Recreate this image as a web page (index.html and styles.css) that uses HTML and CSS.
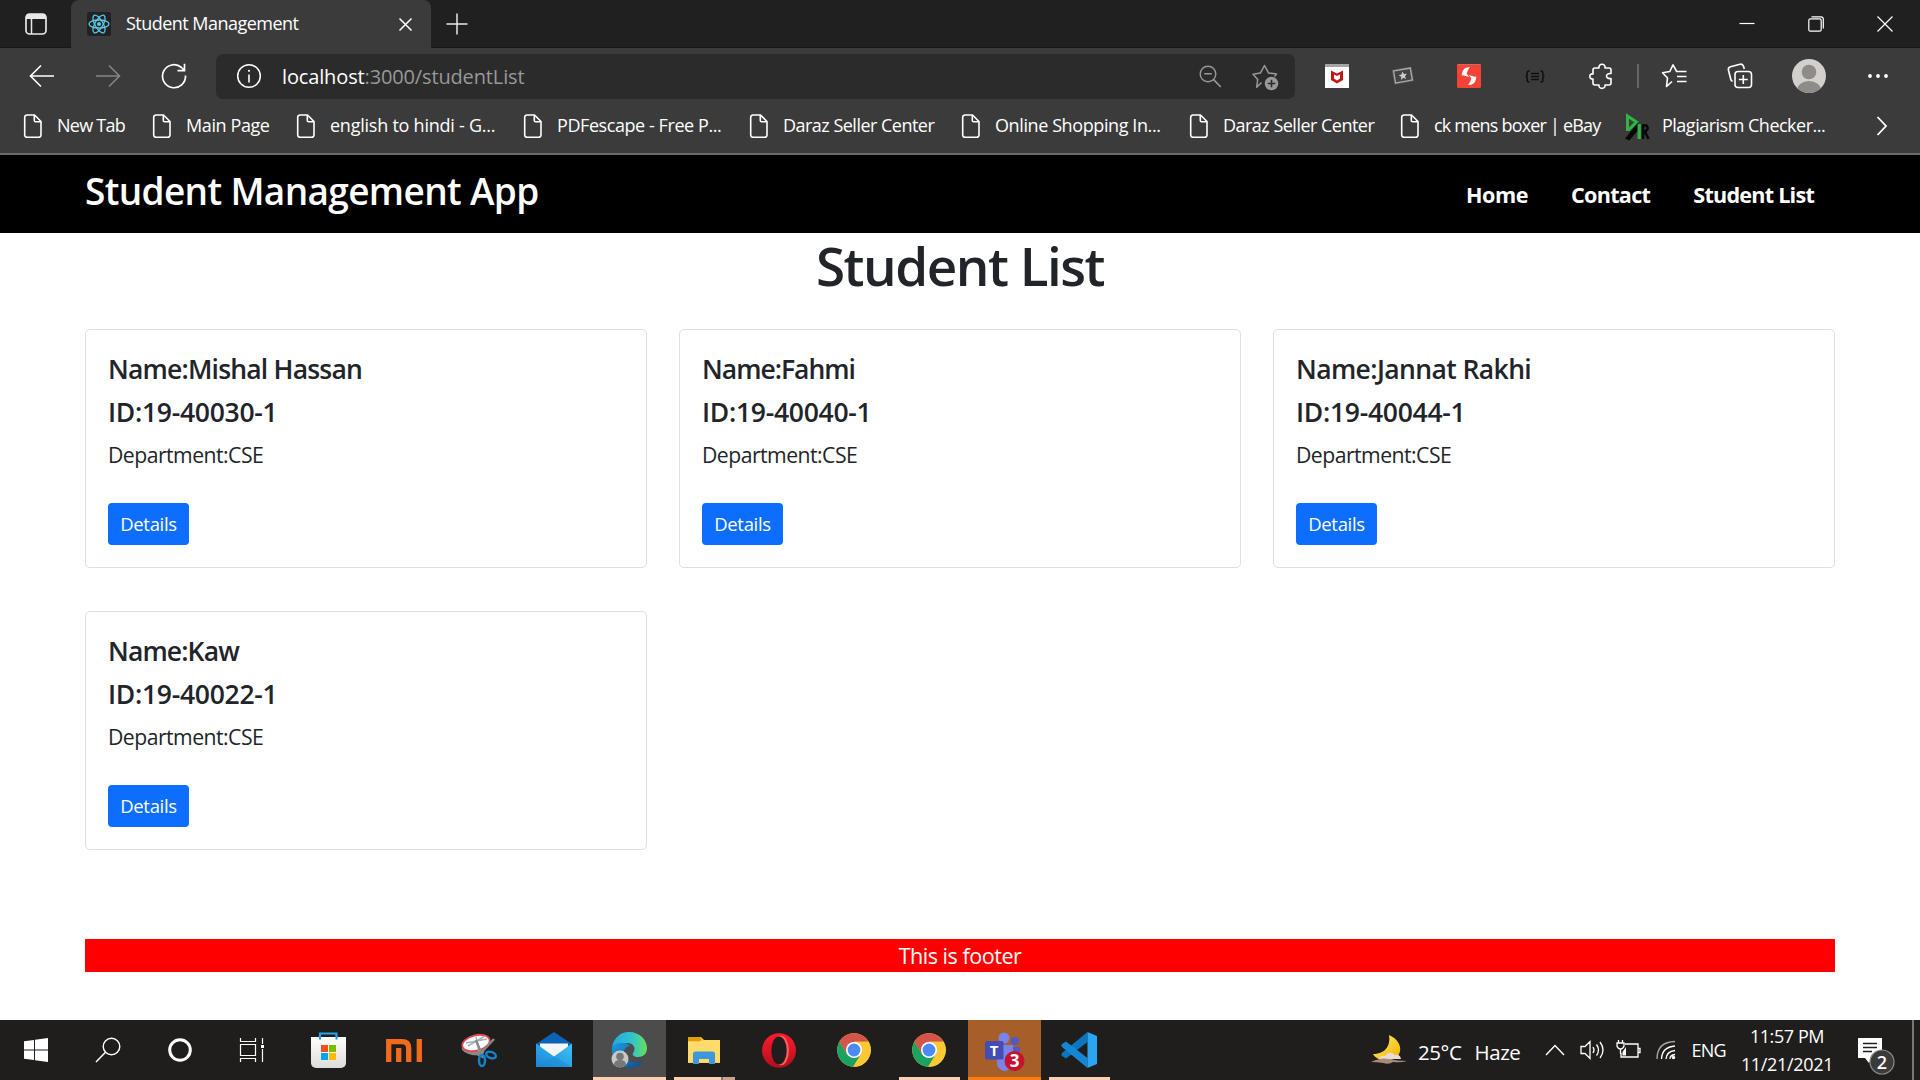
FILE: index.html
```html
<!DOCTYPE html>
<html lang="en">
<head>
<meta charset="utf-8">
<title>Student Management</title>
<link rel="stylesheet" href="styles.css">
</head>
<body>
<svg class="defs" width="0" height="0" aria-hidden="true">
  <defs>
    <symbol id="doc" viewBox="0 0 20 26"><path d="M4 2h7.5L18 8.500V22a2.300 2.300 0 0 1-2.300 2.300H4A2.300 2.300 0 0 1 1.700 22V4.300A2.300 2.300 0 0 1 4 2zM11.300 2v5.500q0 1.300 1.300 1.300H18" fill="none" stroke="#fff" stroke-width="1.600"/></symbol>
    <symbol id="chrome" viewBox="0 0 34 34">
      <circle cx="17" cy="17" r="16.800" fill="#fcc934"/>
      <path d="M2.500 8.600A16.800 16.800 0 0 1 31.600 8.700H17L9.600 21z" fill="#d5544a"/>
      <path d="M2.500 8.600A16.800 16.800 0 0 0 16.200 33.800L24 21.500H10z" fill="#1aa260"/>
      <path d="M31.600 8.700A16.800 16.800 0 0 1 16.200 33.800L24 21 24.500 13 17 8.700z" fill="#fcc934"/>
      <circle cx="17" cy="17" r="8" fill="#fff"/><circle cx="17" cy="17" r="6.400" fill="#4c8bf5"/>
    </symbol>
    <linearGradient id="edgeTop" x1="0" x2="1"><stop offset="0" stop-color="#2aa5e0"/><stop offset=".55" stop-color="#2cc3d2"/><stop offset="1" stop-color="#66e05a"/></linearGradient>
    <linearGradient id="edgeLow" x1="0" y1="0" x2="1" y2="1"><stop offset="0" stop-color="#1b9de2"/><stop offset="1" stop-color="#0c4a8e"/></linearGradient>
    <linearGradient id="opera" x1="0" y1="0" x2="0" y2="1"><stop offset="0" stop-color="#ff1b2d"/><stop offset="1" stop-color="#b0101b"/></linearGradient>
    <linearGradient id="moon" x1="0" y1="0" x2="1" y2="1"><stop offset="0" stop-color="#fff06a"/><stop offset="1" stop-color="#f2b200"/></linearGradient>
    <linearGradient id="bag" x1="0" y1="0" x2="0" y2="1"><stop offset="0" stop-color="#fff"/><stop offset="1" stop-color="#dcdcdc"/></linearGradient>
    <linearGradient id="mailFront" x1="0" y1="1" x2="1" y2="0"><stop offset="0" stop-color="#1c86d8"/><stop offset="1" stop-color="#3dc3f5"/></linearGradient>
  </defs>
</svg>

<div class="browser">
  <div class="tabstrip">
    <svg class="tabmenu" width="24" height="24" viewBox="0 0 24 24"><rect x="2" y="2" width="20" height="20" rx="3.500" fill="none" stroke="#e8e8e8" stroke-width="1.700"/><path d="M2 7V5a3 3 0 0 1 3-3h14a3 3 0 0 1 3 3v2z" fill="#e8e8e8"/><path d="M7.500 7v15" stroke="#e8e8e8" stroke-width="1.500"/></svg>
    <div class="tab">
      <svg width="24" height="24" viewBox="0 0 24 24"><rect width="24" height="24" rx="2" fill="#222"/><g fill="none" stroke="#5cc8e6" stroke-width="1.300"><ellipse cx="12" cy="12" rx="10" ry="4"/><ellipse cx="12" cy="12" rx="10" ry="4" transform="rotate(60 12 12)"/><ellipse cx="12" cy="12" rx="10" ry="4" transform="rotate(120 12 12)"/></g><circle cx="12" cy="12" r="2" fill="#5cc8e6"/></svg>
      <span class="tab-title">Student Management</span>
      <svg class="tab-close" width="15" height="15" viewBox="0 0 15 15"><path d="M1.500 1.500l12 12M13.500 1.500l-12 12" stroke="#fff" stroke-width="1.500"/></svg>
    </div>
    <svg class="newtab" width="22" height="22" viewBox="0 0 22 22"><path d="M11 .5v21M.5 11h21" stroke="#e8e8e8" stroke-width="1.500"/></svg>
    <div class="window-buttons">
      <svg width="16" height="16" viewBox="0 0 16 16"><path d="M.5 7.500h15" stroke="#fff" stroke-width="1.200"/></svg>
      <svg width="16" height="16" viewBox="0 0 16 16"><rect x=".8" y="2.800" width="12.400" height="12.400" rx="1.600" fill="none" stroke="#fff" stroke-width="1.200"/><path d="M3.500.8h9.500a2.300 2.300 0 0 1 2.300 2.300v9.500" fill="none" stroke="#fff" stroke-width="1.200"/></svg>
      <svg width="16" height="16" viewBox="0 0 16 16"><path d="M.5.5l15 15M15.500.5l-15 15" stroke="#fff" stroke-width="1.200"/></svg>
    </div>
  </div>

  <div class="toolbar">
    <svg class="back" width="26" height="24" viewBox="0 0 26 24"><path d="M25 12H2M12 1.500L1.500 12 12 22.500" fill="none" stroke="#fff" stroke-width="1.600"/></svg>
    <svg class="forward" width="26" height="24" viewBox="0 0 26 24"><path d="M1 12h23M14 1.500L24.500 12 14 22.500" fill="none" stroke="#858585" stroke-width="1.600"/></svg>
    <svg class="reload" width="26" height="26" viewBox="0 0 26 26"><path d="M24.500 12.500A11.500 11.500 0 1 1 20.500 4.500l3 3M23.500.8v6.900h-7" fill="none" stroke="#fff" stroke-width="1.700"/></svg>
    <div class="address">
      <svg width="26" height="26" viewBox="0 0 26 26"><circle cx="13" cy="13" r="11.300" fill="none" stroke="#fff" stroke-width="1.500"/><path d="M13 11.500v8" stroke="#fff" stroke-width="1.600"/><circle cx="13" cy="7.800" r="1.100" fill="#fff"/></svg>
      <span class="url"><b>localhost</b>:3000/studentList</span>
      <svg class="zoomout" width="23" height="23" viewBox="0 0 23 23"><circle cx="9" cy="9" r="7.800" fill="none" stroke="#999" stroke-width="1.400"/><path d="M5.200 8.700h7.600M14.600 14.600l7.200 7.400" stroke="#999" stroke-width="1.600"/></svg>
      <svg class="addstar" width="27" height="27" viewBox="0 0 27 27"><path d="M9.500 18.500l-4.800 4.800 1-7.800L1 10.300l7.500-1.400L12.500 1.500l4 7.400 8 1.200-2 2.500" fill="none" stroke="#999" stroke-width="1.500" stroke-linejoin="round"/><circle cx="19.500" cy="19.500" r="6.800" fill="#999"/><path d="M19.500 15.700v7.600M15.700 19.500h7.600" stroke="#2b2b2b" stroke-width="1.600"/></svg>
    </div>
    <div class="extensions">
      <svg width="26" height="26" viewBox="0 0 26 26"><rect x="1" y="1" width="24" height="24" fill="#fff"/><path d="M1 1h24v3H1z" fill="#a5a5a5"/><path d="M7 7.500l6 3 6-3v9.500l-6 3.500-6-3.500zM10 11.500v4l3 2 3-2v-4l-3 1.500z" fill="#c01818" fill-rule="evenodd"/></svg>
      <svg width="26" height="26" viewBox="0 0 26 26"><g transform="rotate(-10 13 13)"><rect x="3" y="5" width="20" height="15" fill="#555"/><rect x="4.500" y="6.500" width="17" height="12" fill="#444" stroke="#aaa" stroke-width="1.300"/><path d="M13 8.500l1.200 2.800 3 .2-2.300 2 .7 3-2.600-1.600-2.600 1.600.7-3-2.300-2 3-.2z" fill="#ccc"/></g></svg>
      <svg width="26" height="26" viewBox="0 0 26 26"><rect x="1" y="1" width="24" height="24" rx="1.500" fill="#f44336"/><path d="M1.500 1.500h23" stroke="#c96a61"/><path d="M14 4q-7 0-8 6l-.3 2.500 1.300-.3 6 1.800-2.300-3.500q.8-3.500 3.300-6.500z" fill="#fff"/><path d="M12 22q7 0 8-6l.3-2.500-1.300.3-6-1.800 2.300 3.500q-.8 3.500-3.300 6.500z" fill="#fff"/></svg>
      <svg width="26" height="26" viewBox="0 0 26 26"><path d="M7.500 8h-.8q-1.500 0-1.500 1.500v2q0 2-1.700 2 1.700 0 1.700 2v2q0 1.500 1.500 1.500h.8M18.500 8h.8q1.500 0 1.500 1.500v2q0 2 1.700 2-1.700 0-1.700 2v2q0 1.500-1.500 1.500h-.8M9 10.500h8M9 13.500h8M9 16.500h8" fill="none" stroke="#101010" stroke-width="1.600"/></svg>
      <svg class="puzzle" width="26" height="26" viewBox="0 0 26 26"><path d="M6 5h4c-1-5 7-5 6 0h4a2 2 0 0 1 2 2v3.500c-6-.8-6 6 0 5V20a2 2 0 0 1-2 2h-4c1 4.500-7 4.500-6 0H6a2 2 0 0 1-2-2v-4c-4.200.7-4.200-6 0-5V7a2 2 0 0 1 2-2z" fill="none" stroke="#fff" stroke-width="1.600" stroke-linejoin="round"/></svg>
    </div>
    <span class="divider"></span>
    <svg class="favorites" width="27" height="26" viewBox="0 0 27 26"><path d="M11 18.500l-5.500 5 1-8.500L1.500 9.800l7.300-1.300L12 1.800l3.700 6.700H25.500M16 13.500h9.500M16 18.500h9.500" fill="none" stroke="#fff" stroke-width="1.600" stroke-linejoin="round"/></svg>
    <svg class="collections" width="26" height="26" viewBox="0 0 26 26"><rect x="8" y="8.500" width="16.500" height="16" rx="3" fill="none" stroke="#fff" stroke-width="1.600"/><path d="M16.300 12v9M11.800 16.500h9M5.500 18.500L4 17 1.500 7.500a3 3 0 0 1 2-3.700L13 1.200a3 3 0 0 1 3.500 2L17.300 6" fill="none" stroke="#fff" stroke-width="1.600"/></svg>
    <svg class="avatar" width="34" height="34" viewBox="0 0 34 34"><clipPath id="av"><circle cx="17" cy="17" r="17"/></clipPath><g clip-path="url(#av)"><path d="M0 0h34v34H0z" fill="#d2d0cc"/><circle cx="17" cy="13" r="7.300" fill="#8f8b88"/><ellipse cx="17" cy="31" rx="12" ry="9" fill="#8f8b88"/></g></svg>
    <svg class="more" width="22" height="6" viewBox="0 0 22 6"><circle cx="3" cy="3" r="1.900" fill="#fff"/><circle cx="11" cy="3" r="1.900" fill="#fff"/><circle cx="19" cy="3" r="1.900" fill="#fff"/></svg>
  </div>

  <div class="bookmarks">
    <a class="bm"><svg width="20" height="26"><use href="#doc"/></svg><span class="bm1">New Tab</span></a>
    <a class="bm"><svg width="20" height="26"><use href="#doc"/></svg><span class="bm2">Main Page</span></a>
    <a class="bm"><svg width="20" height="26"><use href="#doc"/></svg><span class="bm3">english to hindi - G...</span></a>
    <a class="bm"><svg width="20" height="26"><use href="#doc"/></svg><span class="bm4">PDFescape - Free P...</span></a>
    <a class="bm"><svg width="20" height="26"><use href="#doc"/></svg><span class="bm5">Daraz Seller Center</span></a>
    <a class="bm"><svg width="20" height="26"><use href="#doc"/></svg><span class="bm6">Online Shopping In...</span></a>
    <a class="bm"><svg width="20" height="26"><use href="#doc"/></svg><span class="bm5">Daraz Seller Center</span></a>
    <a class="bm"><svg width="20" height="26"><use href="#doc"/></svg><span class="bm8">ck mens boxer | eBay</span></a>
    <a class="bm bm-wide"><svg width="24" height="25" viewBox="0 0 24 25"><path d="M1.500 17V2l9 6-8 8" fill="none" stroke="#2db742" stroke-width="3"/><path d="M1 24L11 12v3.500L3 25zM17 25V11.500h3.500q2.500 3-.5 5.500h-3M18.500 17l4 8" fill="none" stroke="#080808" stroke-width="2.500"/><path d="M13.200 10v15" stroke="#2db742" stroke-width="3.300"/></svg><span class="bm9">Plagiarism Checker...</span></a>
    <svg class="overflow" width="12" height="20" viewBox="0 0 12 20"><path d="M1.500 1l8.500 9-8.500 9" fill="none" stroke="#fff" stroke-width="1.800"/></svg>
  </div>
</div>

<header class="app-nav">
  <h3 class="brand">Student Management App</h3>
  <nav><a class="l1">Home</a><a class="l2">Contact</a><a class="l3">Student List</a></nav>
</header>

<main class="content">
  <h1><span>Student List</span></h1>
  <div class="cards">
    <article class="card"><h5 class="n1">Name:Mishal Hassan</h5><h5 class="id">ID:19-40030-1</h5><p>Department:CSE</p><a class="btn">Details</a></article>
    <article class="card"><h5 class="n2">Name:Fahmi</h5><h5 class="id">ID:19-40040-1</h5><p>Department:CSE</p><a class="btn">Details</a></article>
    <article class="card"><h5 class="n3">Name:Jannat Rakhi</h5><h5 class="id">ID:19-40044-1</h5><p>Department:CSE</p><a class="btn">Details</a></article>
    <article class="card"><h5 class="n4">Name:Kaw</h5><h5 class="id">ID:19-40022-1</h5><p>Department:CSE</p><a class="btn">Details</a></article>
  </div>
  <footer><span>This is footer</span></footer>
</main>

<div class="taskbar">
  <div class="sys">
    <svg width="24" height="24" viewBox="0 0 24 24"><path d="M0 3.300L10 2v9.500H0zM11 1.800L24 0v11.500H11zM0 12.500h10V22L0 20.700zM11 12.500h13V24l-13-1.800z" fill="#fff"/></svg>
    <svg width="26" height="26" viewBox="0 0 26 26"><circle cx="16.500" cy="9.500" r="8.300" fill="none" stroke="#fff" stroke-width="1.400"/><path d="M10.500 15.300L1 25" stroke="#fff" stroke-width="1.500"/></svg>
    <svg width="26" height="26" viewBox="0 0 26 26"><circle cx="13" cy="13" r="10.300" fill="none" stroke="#fff" stroke-width="3"/></svg>
    <svg width="26" height="24" viewBox="0 0 26 24"><path d="M1.500 0v3.500h15V0M1.500 6.500h15v11h-15zM1.500 24v-3.500h15V24M23.500 0v6M23.500 11v13" fill="none" stroke="#fff" stroke-width="1.200"/><path d="M22 7h3v3h-3z" fill="#fff"/></svg>
  </div>
  <div class="apps">
    <div class="tile"><svg width="35" height="36" viewBox="0 0 35 36"><path d="M9 6.500V1.500h16.500v5" fill="none" stroke="#1fa8f0" stroke-width="2.200"/><path d="M0 5h35v26a5 5 0 0 1-5 5H5a5 5 0 0 1-5-5z" fill="url(#bag)"/><path d="M9 5v2.500M25.500 5v2.500" stroke="#1690dd" stroke-width="2"/><path d="M10 13h7v7h-7z" fill="#f25022"/><path d="M18 13h7v7h-7z" fill="#7fba00"/><path d="M10 21h7v7h-7z" fill="#00a4ef"/><path d="M18 21h7v7h-7z" fill="#ffb900"/></svg></div>
    <div class="tile"><svg width="36" height="23" viewBox="0 0 36 23"><path d="M2.700 23V2.700H16q6.700 0 6.700 6.500V23M12.700 9v14M33.300 0v23" fill="none" stroke="#f26a1b" stroke-width="5.300"/></svg></div>
    <div class="tile"><svg width="36" height="36" viewBox="0 0 36 36"><ellipse cx="12" cy="18" rx="11.500" ry="5" transform="rotate(10 12 18)" fill="#8b8b8b"/><ellipse cx="15" cy="11" rx="14" ry="7.700" transform="rotate(-14 15 11)" fill="#fff" stroke="#e2484b" stroke-width="1.800"/><path d="M5 11l21-4M7 14L24 4M15 5l3 14" stroke="#aab0b5" stroke-width="1.500"/><path d="M15 8l7 18M17 24L33 7" stroke="#888" stroke-width="2.500"/><ellipse cx="21" cy="28.500" rx="3" ry="5.500" fill="none" stroke="#1583cc" stroke-width="2.500"/><ellipse cx="30" cy="23" rx="5" ry="3" fill="none" stroke="#1583cc" stroke-width="2.500" transform="rotate(20 30 23)"/></svg></div>
    <div class="tile"><svg width="36" height="36" viewBox="0 0 36 36"><path d="M0 12L18 0l18 12v10H0z" fill="#0b63b8"/><path d="M4 11.500h28V25H4z" fill="#f5f5f5"/><path d="M0 11.500L18 24.500 36 11.500V35H0z" fill="url(#mailFront)"/><path d="M18 24.500L36 35H0z" fill="#1a87d6" opacity=".5"/></svg></div>
    <div class="tile active"><svg width="36" height="36" viewBox="0 0 36 36"><path d="M1 15C3 6 9 0 18 0c11 0 18 8 18 16 0 6-4 9-9 9-4 0-6-2-5-4 4-5 0-10-6-10-7 0-13 3-15 4z" fill="url(#edgeTop)"/><path d="M1 15c3-5 14-6 18-1-6 1-8 7-4 12 4 5 11 6 18 2C28 35 22 37 15 35 5 33 0 25 1 15z" fill="url(#edgeLow)"/><circle cx="9" cy="27" r="8.500" fill="#c7c7c5"/><circle cx="9" cy="24.500" r="3.800" fill="#777"/><path d="M3 33q0-5 6-5t6 5q-6 4.500-12 0z" fill="#777"/></svg></div>
    <div class="tile open grouped"><svg width="32" height="32" viewBox="0 0 32 32"><path d="M0 3h13l3 3h16v23H0z" fill="#ffd257"/><path d="M0 3h12l2 2-2 2.500H0z" fill="#e0a008"/><path d="M0 7.500h14l3-1.500h15v22H0z" fill="#ffdb69"/><path d="M5 30V20q0-2.500 2.500-2.500h17q2.500 0 2.500 2.500v10h-6v-5H11v5z" fill="#3c97dc"/></svg></div>
    <div class="tile"><svg width="34" height="35" viewBox="0 0 34 35"><ellipse cx="17" cy="17.500" rx="17" ry="17.300" fill="url(#opera)"/><ellipse cx="19" cy="17.500" rx="8" ry="14.700" fill="#ff5b5b"/><ellipse cx="17" cy="17.500" rx="7.700" ry="14" fill="#1f1e1d"/></svg></div>
    <div class="tile"><svg width="34" height="34"><use href="#chrome"/></svg></div>
    <div class="tile open"><svg width="34" height="34"><use href="#chrome"/></svg></div>
    <div class="tile alert"><svg width="40" height="44" viewBox="0 -2 40 44"><circle cx="19" cy="6" r="5.500" fill="#7b83eb"/><circle cx="30" cy="9" r="4" fill="#5059c9"/><path d="M25 15h10v12q-2 6-10 5z" fill="#5059c9"/><path d="M12 13h16v18q-3 8-9 8-7-2-7-8z" fill="#7b83eb"/><rect y="9" width="18.500" height="18.500" rx="1.500" fill="#444cb8"/><text x="9.200" y="23.500" text-anchor="middle" class="teams-t">T</text><circle cx="29.500" cy="29" r="10" fill="#c4122f"/><text x="29.500" y="35" text-anchor="middle" class="teams-n">3</text></svg></div>
    <div class="tile open"><svg width="36" height="36" viewBox="0 0 36 36"><path d="M26.500 0v10L5 26.500 1 24q-1.500-1.500 0-3z" fill="#0b75bd"/><path d="M1 12l4-2.500L26.500 26v10L1 15q-1.500-1.500 0-3z" fill="#1587d2"/><path d="M26.500 0L36 4v28l-9.500 4z" fill="#2aa5f2"/></svg></div>
  </div>
  <div class="tray">
    <svg class="weather" width="36" height="30" viewBox="0 0 36 30"><path d="M18 0c16 7 14 24 0 25-8 1-14-2-16-6C13 19 20 12 18 0z" fill="url(#moon)"/><path d="M8 24q1-4 6-3 4-6 10-1 5-1 6 4z" fill="#e8ddd4"/><path d="M0 27q10-5 18-3t18 2q-6 2-14 1-4 3-10 1-6-1-12-1z" fill="#a78a78"/></svg>
    <span class="temp">25°C</span><span class="haze">Haze</span>
    <svg class="chev" width="20" height="12" viewBox="0 0 20 12"><path d="M1 11l9-9.500 9 9.500" fill="none" stroke="#fff" stroke-width="1.400"/></svg>
    <svg class="vol" width="25" height="20" viewBox="0 0 25 20"><path d="M1 6.500h4L10 1.500v17L5 13.500H1zM13 7q2 3 0 6M16.500 4.500q4 5.500 0 11M20 2q6 8 0 16" fill="none" stroke="#fff" stroke-width="1.300"/></svg>
    <svg class="batt" width="25" height="20" viewBox="0 0 25 20"><path d="M9 4h13v13H5v-4M22.500 8.500h1.500v4h-1.500M1 3h7v3q-1 3-3.500 3T1 6zM2.500 0v3M6.500 0v3M4.500 9v5" fill="none" stroke="#fff" stroke-width="1.300"/><path d="M6.500 15.500V12L10 7v8.500z" fill="#fff"/></svg>
    <svg class="wifi" width="20" height="20" viewBox="0 0 20 20"><g fill="none" stroke="#aaa" stroke-width="1.300"><path d="M1 19Q1 2 19 1.500" /><path d="M5.500 19Q6 7 19 6" stroke="#fff"/><path d="M10 19q.5-7.500 9-8.500" stroke="#fff"/><path d="M14 19q0-4 5-4.500" stroke="#fff"/></g><circle cx="17.500" cy="17.500" r="1.700" fill="#fff"/></svg>
    <span class="lang">ENG</span>
    <div class="clock"><span class="time">11:57 PM</span><span class="date">11/21/2021</span></div>
    <svg class="notif" width="38" height="38" viewBox="0 0 38 38"><path d="M0 0h24v20H15l-4 5-4-5H0z" fill="#fff"/><path d="M5 5.500h14M5 9.500h14M5 13.500h9" stroke="#1f1e1d" stroke-width="1.500"/><circle cx="24" cy="24" r="12" fill="#3a3a3a" stroke="#8a8a8a" stroke-width="1.200"/><text x="24" y="30.500" text-anchor="middle" class="badge">2</text></svg>
    <span class="peek"></span>
  </div>
</div>
</body>
</html>
```
FILE: styles.css
```css
* { box-sizing: border-box; }
body { margin: 0; height: 1080px; overflow: hidden; background: #fff; color: #212529; font-family: "Open Sans", "Noto Sans", sans-serif; display: flex; flex-direction: column; }
svg { flex: none; display: block; overflow: visible; }
span, a, h1, h3, h5, p { white-space: nowrap; }
.defs { position: absolute; }

.browser { height: 155px; background: #3b3b3b; color: #fff; border-bottom: 2px solid #6b6b6b; flex: none; }
.tabstrip { height: 48px; background: #202020; display: flex; align-items: center; border-bottom: 1px solid #181818; }
.tabmenu { margin-left: 24px; }
.tab { margin-left: 23px; width: 360px; height: 48px; background: #3b3b3b; border-radius: 8px 8px 0 0; display: flex; align-items: center; padding: 0 18px 0 16px; align-self: flex-start; }
.tab-title { margin-left: 15px; font-size: 18px; letter-spacing: -.53px; padding-bottom: 2px; }
.tab-close { margin-left: auto; }
.newtab { margin-left: 15px; }
.window-buttons { margin-left: auto; margin-right: 27px; display: flex; gap: 53px; }

.toolbar { height: 56px; display: flex; align-items: center; }
.back { margin-left: 29px; }
.forward { margin-left: 40px; }
.reload { margin-left: 40px; }
.address { margin-left: 29px; width: 1079px; height: 45px; border-radius: 7px; background: #2b2b2b; display: flex; align-items: center; padding-left: 20px; }
.url { margin-left: 20px; font-size: 20px; color: #999; letter-spacing: -.14px; }
.url b { font-weight: 400; color: #fff; }
.zoomout { margin-left: auto; }
.addstar { margin: 2px 16px 0 30px; }
.extensions { display: flex; gap: 40px; margin-left: 29px; }
.puzzle { margin-left: 1px; }
.divider { width: 2px; height: 24px; background: #666; margin-left: 22px; }
.favorites { margin-left: 22px; }
.collections { margin-left: 39px; }
.avatar { margin-left: 39px; }
.more { margin-left: 41px; }

.bookmarks { height: 44px; display: grid; grid-template-columns: 129px 144px 227px 226px 212px 228px 211px 225px 251px auto; align-items: center; padding-left: 23px; font-size: 18px; }
.bm { display: flex; align-items: center; gap: 14px; }
.bm span { padding-bottom: 2px; }
.bm-wide { gap: 12px; padding-left: 1px; }
.bm1 { letter-spacing: -.75px; }
.bm2 { letter-spacing: -.4px; }
.bm3 { letter-spacing: -.24px; }
.bm4 { letter-spacing: -.43px; }
.bm5 { letter-spacing: -.52px; }
.bm6 { letter-spacing: -.4px; }
.bm8 { letter-spacing: -.8px; }
.bm9 { letter-spacing: -.5px; }

.app-nav { height: 78px; flex: none; background: #000; color: #fff; display: flex; justify-content: space-between; padding: 0 106px 0 85px; }
.brand { margin: 13px 0 0; font-size: 37px; line-height: 45px; font-weight: 600; letter-spacing: -.65px; }
.app-nav nav { display: flex; gap: 43px; font-size: 21.6px; font-weight: 700; line-height: 32px; padding-top: 24px; }
.l1 { letter-spacing: -.5px; }
.l2 { letter-spacing: -.7px; }
.l3 { letter-spacing: -.77px; }

.content { padding: 0 85px; flex: 1; display: flex; flex-direction: column; }
h1 { margin: 1px 0 32px; font-size: 53px; line-height: 63px; font-weight: 600; text-align: center; letter-spacing: -1.5px; }
.cards { display: grid; grid-template-columns: repeat(3, 562px); column-gap: 32px; row-gap: 43px; }
.card { height: 239px; border: 1px solid #dfdfdf; border-radius: 5px; padding: 23px 22px 0; display: flex; flex-direction: column; align-items: flex-start; }
h5 { margin: 0 0 11px; font-size: 26.500px; line-height: 32px; font-weight: 600; }
.n1 { letter-spacing: -.8px; }
.n2 { letter-spacing: -1px; }
.n3 { letter-spacing: -.6px; }
.n4 { letter-spacing: -.87px; }
.id { letter-spacing: -.28px; margin-bottom: 10px; }
.card p { margin: 0 0 32px; font-size: 21.200px; line-height: 33px; letter-spacing: -.52px; }
.btn { display: flex; align-items: center; justify-content: center; width: 81px; height: 42px; padding-bottom: 2px; border-radius: 4px; background: #0d6efd; color: #fff; font-size: 18.500px; letter-spacing: -.33px; }
footer { margin-top: 89px; height: 33px; line-height: 33px; background: red; color: #fff; text-align: center; font-size: 21.600px; letter-spacing: -.5px; }

.taskbar { height: 60px; flex: none; background: #1f1e1d; color: #fff; display: flex; align-items: center; }
.sys { display: grid; grid-template-columns: repeat(4, 72px); justify-items: center; align-items: center; }
.apps { display: flex; gap: 2px; margin-left: 5px; height: 60px; }
.tile { width: 73px; display: flex; align-items: center; justify-content: center; position: relative; padding-right: 2px; }
.tile.active { background: #4c4c4c; border-bottom: 3px solid #fdceaf; padding-top: 3px; }
.tile.alert { background: #a65f29; border-bottom: 3px solid #ff7a08; padding-top: 6px; padding-right: 0; }
.tile.open::after { content: ""; position: absolute; left: 6px; right: 6px; bottom: 0; height: 3px; background: #fdceaf; }
.tile.grouped::after { background: linear-gradient(90deg, #fdceaf 47px, #8d7464 47px, #8d7464 49px, #c9a48b 49px); }
.teams-t { font-size: 15px; font-weight: 700; fill: #fff; }
.teams-n { font-size: 17px; font-weight: 700; fill: #fff; }
.tray { margin-left: auto; display: flex; align-items: center; height: 60px; font-size: 18px; }
.temp, .haze { font-size: 20.500px; padding-top: 3px; letter-spacing: -.4px; }
.temp { margin-left: 11px; }
.haze { margin-left: 13px; }
.chev { margin-left: 25px; }
.vol { margin-left: 15px; }
.batt { margin-left: 11px; }
.wifi { margin-left: 15px; }
.lang { margin-left: 15px; letter-spacing: -.7px; }
.clock { margin-left: 15px; width: 92px; display: flex; flex-direction: column; align-items: center; line-height: 28px; }
.time { letter-spacing: -.42px; }
.date { letter-spacing: -.33px; }
.notif { margin: 13px 0 0 25px; }
.badge { font-size: 18px; font-weight: 600; fill: #fff; }
.peek { width: 2px; height: 60px; background: #777; margin: 0 6px 0 16px; }
```
